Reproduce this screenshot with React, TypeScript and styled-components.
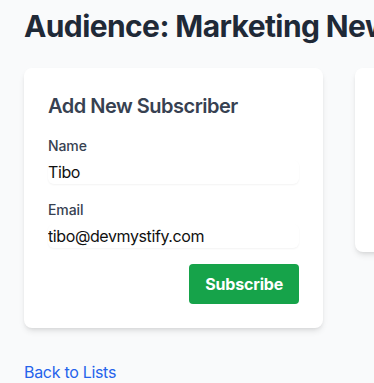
import React, { useState } from 'react'
import styled, { createGlobalStyle } from 'styled-components'

const GlobalStyle = createGlobalStyle`
  * {
    box-sizing: border-box;
  }
  html, body {
    margin: 0;
    padding: 0;
    background: #f9fafb;
    overflow: hidden;
  }
  body {
    font-family: Inter, 'Noto Sans', sans-serif;
    letter-spacing: -0.3px;
    -webkit-font-smoothing: antialiased;
  }
`

const subscribers = [
  { name: 'Alice', email: 'alice@example.com' },
  { name: 'Bruno', email: 'bruno@example.com' },
]

const App = () => {
  const [name, setName] = useState('Tibo')
  const [email, setEmail] = useState('tibo@devmystify.com')

  function handleSubmit(e: React.FormEvent<HTMLFormElement>) {
    e.preventDefault()
  }

  return (
    <Page>
      <GlobalStyle />
      <Title>Audience: Marketing Newsletter</Title>

      <Grid>
        <Card>
          <CardTitle>Add New Subscriber</CardTitle>
          <Form onSubmit={handleSubmit}>
            <Field>
              <Label htmlFor='sub-name'>Name</Label>
              <Input id='sub-name' value={name} onChange={(e) => setName(e.target.value)} />
            </Field>
            <Field>
              <Label htmlFor='sub-email'>Email</Label>
              <Input
                id='sub-email'
                type='email'
                value={email}
                onChange={(e) => setEmail(e.target.value)}
              />
            </Field>
            <Actions>
              <SubmitButton type='submit'>Subscribe</SubmitButton>
            </Actions>
          </Form>
        </Card>

        <Card>
          <CardTitle>Subscribers</CardTitle>
          <List>
            {subscribers.map((s) => (
              <ListItem key={s.email}>{s.name}</ListItem>
            ))}
          </List>
        </Card>
      </Grid>

      <BackLink href='#'>Back to Lists</BackLink>
    </Page>
  )
}

const Page = styled.div`
  padding: 8px 24px;
  width: 1000px;
`
const Title = styled.h1`
  margin: 0 0 24px;
  font-size: 30px;
  line-height: 36px;
  font-weight: 700;
  letter-spacing: -0.6px;
  color: #1f2937;
  white-space: nowrap;
`
const Grid = styled.div`
  display: grid;
  grid-template-columns: repeat(3, 299px);
  gap: 32px;
  align-items: start;
`
const Card = styled.div`
  background: #fff;
  border-radius: 8px;
  padding: 24px;
  box-shadow: 0 4px 6px -1px rgba(0, 0, 0, 0.1), 0 2px 4px -2px rgba(0, 0, 0, 0.1);
`
const CardTitle = styled.h2`
  margin: 0 0 16px;
  font-size: 20px;
  line-height: 28px;
  font-weight: 600;
  letter-spacing: -0.5px;
  color: #374151;
  white-space: nowrap;
`
const Form = styled.form`
  display: flex;
  flex-direction: column;
  gap: 16px;
`
const Field = styled.div`
  display: flex;
  flex-direction: column;
`
const Label = styled.label`
  font-size: 14px;
  line-height: 20px;
  font-weight: 500;
  letter-spacing: -0.1px;
  color: #374151;
`
const Input = styled.input`
  margin-top: 4px;
  width: 100%;
  border: 0;
  padding: 0;
  border-radius: 6px;
  font-family: inherit;
  font-size: 16px;
  line-height: 24px;
  letter-spacing: -0.4px;
  height: 24px;
  color: #111;
  background: #fff;
  box-shadow: 0 1px 2px 0 rgba(0, 0, 0, 0.05);
  outline: none;
`
const Actions = styled.div`
  display: flex;
  justify-content: flex-end;
`
const SubmitButton = styled.button`
  border: 0;
  border-radius: 4px;
  background: #16a34a;
  color: #fff;
  font-family: inherit;
  font-size: 16px;
  line-height: 24px;
  font-weight: 700;
  letter-spacing: -0.2px;
  padding: 8px 16px;
  cursor: pointer;
`
const List = styled.ul`
  margin: 0;
  padding: 0;
  list-style: none;
`
const ListItem = styled.li`
  padding: 11px 0;
  font-size: 16px;
  line-height: 24px;
  color: #374151;
`
const BackLink = styled.a`
  display: inline-block;
  margin-top: 32px;
  font-size: 16px;
  line-height: 24px;
  color: #2563eb;
  text-decoration: none;
`

export default App
